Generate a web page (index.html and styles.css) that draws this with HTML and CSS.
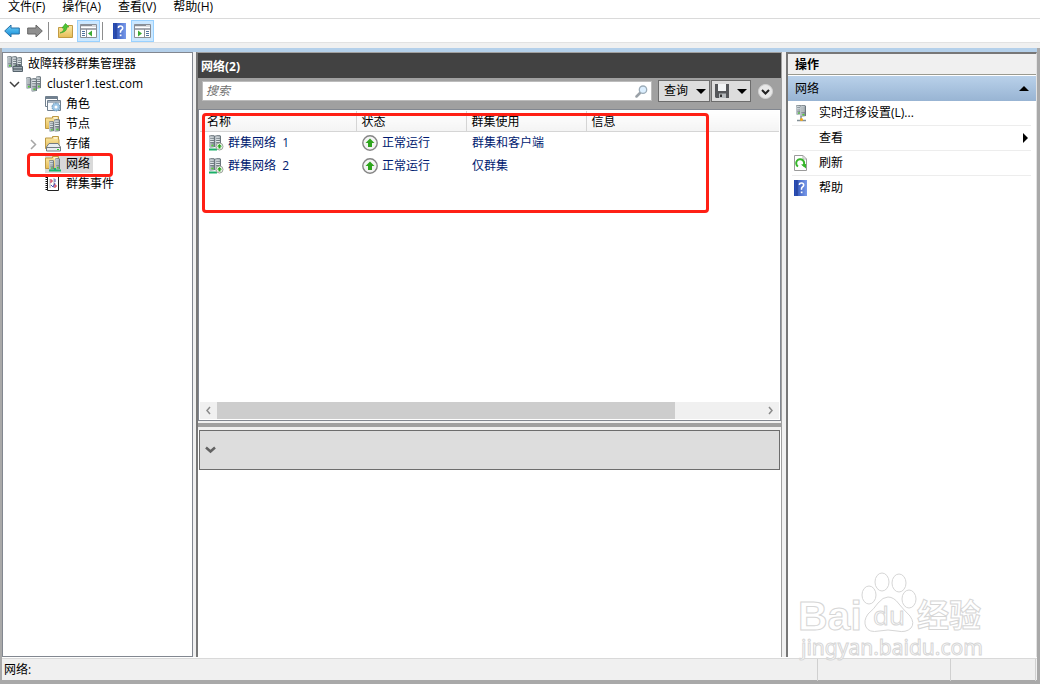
FILE: index.html
```html
<!DOCTYPE html>
<html lang="zh-CN">
<head>
<meta charset="utf-8">
<title>故障转移群集管理器</title>
<link rel="stylesheet" href="styles.css">
</head>
<body>
<svg class="defs" aria-hidden="true">
  <defs>
    <linearGradient id="steel" x1="0" x2="1"><stop offset="0" stop-color="#c3cbd0"/><stop offset="1" stop-color="#77828a"/></linearGradient>
    <linearGradient id="book" x1="0" x2="1"><stop offset="0" stop-color="#2145ae"/><stop offset="1" stop-color="#7a9bea"/></linearGradient>
    <linearGradient id="folder" x1="0" y1="0" x2="0" y2="1"><stop offset="0" stop-color="#fbe9a9"/><stop offset="1" stop-color="#e6bd56"/></linearGradient>
    <linearGradient id="sky" x1="0" y1="0" x2="0" y2="1"><stop offset="0" stop-color="#6fd0fa"/><stop offset="1" stop-color="#128bd6"/></linearGradient>
    <symbol id="rack" viewBox="0 0 5 12" preserveAspectRatio="none">
      <path d="M0 1L4 0L5 1V11L1 12L0 11Z" fill="url(#steel)"/>
      <path d="M0 1L4 0M1 3H4M1 5H4M1 7H4M4.800 1V11" stroke="#5b666d" fill="none" stroke-width=".6"/>
      <path d="M1 2H4M1 4H4M1 6H4" stroke="#edf2f4" stroke-width=".8"/>
      <rect x="2" y="9" width="1.6" height="1.4" fill="#4ed52e"/>
    </symbol>
    <symbol id="servers" viewBox="0 0 16 16">
      <use href="#rack" x="0" y="1" width="5" height="12"/><use href="#rack" x="10" y="0" width="5" height="13"/><use href="#rack" x="5" y="2" width="6" height="14"/>
    </symbol>
    <symbol id="manager" viewBox="0 0 16 16">
      <use href="#rack" x="0" y="0" width="5" height="12"/><use href="#rack" x="5" y="0" width="5" height="13"/><use href="#rack" x="10" y="1" width="5" height="13"/>
      <path d="M6 10.500H15.500V15.500H6Z" fill="#a2adb4" stroke="#56636c"/><path d="M9 10V9H13V10M6 13H15" fill="none" stroke="#414c55"/>
    </symbol>
    <symbol id="roles" viewBox="0 0 16 16">
      <path d="M.5 .5H12.500V10.500H.5Z" fill="#fff" stroke="#71808f"/><path d="M0 2H13" stroke="#71808f" stroke-width="2"/>
      <path d="M2.500 4.500H15.500V14.500H2.500Z" fill="#f9fbfd" stroke="#71808f"/><path d="M3 6H15" stroke="#a7b3bf" stroke-width="2"/>
      <circle cx="11" cy="11" r="4" fill="#9dc6e6" stroke="#608eae" stroke-dasharray="1.500 1"/><circle cx="11" cy="11" r="1.500" fill="#fff"/>
    </symbol>
    <symbol id="dir" viewBox="0 0 16 16"><path d="M.5 2H7.500V.5H13.500V3.500H14V12.500H.5Z" fill="url(#folder)" stroke="#bd9945"/><path d="M9 2H12" stroke="#fff"/></symbol>
    <symbol id="nodes" viewBox="0 0 16 16">
      <use href="#dir" width="16" height="16"/><use href="#rack" x="4" y="5" width="5" height="11"/><use href="#rack" x="9" y="3" width="6" height="13"/>
    </symbol>
    <symbol id="storage" viewBox="0 0 16 16">
      <use href="#dir" width="16" height="16"/><path d="M4 7.500H13L15.500 11V15H1.500V11Z" fill="#e9edef" stroke="#727b82"/><path d="M2 11.500H15" stroke="#727b82"/><path d="M12 13.500H14" stroke="#2ed029"/>
    </symbol>
    <symbol id="networks" viewBox="0 0 16 16">
      <use href="#dir" width="16" height="16"/><use href="#rack" x="4" y="4" width="5" height="10"/><use href="#rack" x="10" y="2" width="5" height="12"/>
      <path d="M4 14.500H16M10 12V15" stroke="#1bb36e" stroke-width="2"/>
    </symbol>
    <symbol id="events" viewBox="0 0 16 16">
      <path d="M2.500 .5H13.500V14.500H2.500Z" fill="#fff" stroke="#222"/><path d="M1.500 1V15" stroke="#111" stroke-width="2" stroke-dasharray="1 1"/>
      <path d="M5 3V12M9 2V12" stroke="#aaa"/><path d="M5 4H7V6H5M9 9H11V11H9" stroke="#d32d47" fill="none"/><path d="M10 3V6M6 9L8 11L10 7" stroke="#4a4cb4" fill="none"/>
    </symbol>
    <symbol id="net-up" viewBox="0 0 16 16">
      <use href="#rack" x="1" y="0" width="6" height="13"/><use href="#rack" x="7" y="0" width="6" height="13"/>
      <path d="M1 14.500H9" stroke="#1bae67" stroke-width="2"/><circle cx="11.500" cy="11.500" r="3.500" fill="#f1f5ef" stroke="#9ca49b"/><path d="M11.500 9L14 11.500H12.500V13.500H10.500V11.500H9Z" fill="#28a51d"/>
    </symbol>
    <symbol id="up" viewBox="0 0 16 16"><circle cx="8" cy="8" r="7.200" fill="#f4f4f4" stroke="#858585" stroke-width="1.400"/><path d="M8 3.500L12.500 8H10V12H6V8H3.500Z" fill="#2fa51d"/></symbol>
    <symbol id="help" viewBox="0 0 13 16"><path d="M0 0H13V16H0Z" fill="url(#book)"/><path d="M3 0V16" stroke="#203b91"/><path d="M5.500 5V4.300Q5.500 3 7.500 3T9.700 5Q9.700 6.200 8.400 7T7.600 9.800" stroke="#fff" stroke-width="1.600" fill="none"/><path d="M6.800 11.500H8.500V13.200H6.800Z" fill="#fff"/></symbol>
    <symbol id="panel" viewBox="0 0 17 14">
      <path d="M.5 .5H16.500V13.500H.5Z" fill="#fff" stroke="#8a8f96"/><path d="M0 1.500H12M0 5H17" stroke="#8a8f96" stroke-width="1.500"/><path d="M12.500 2H13.500M14.500 2H15.500" stroke="#68717b"/>
    </symbol>
    <symbol id="mag" viewBox="0 0 13 13"><path d="M1.500 11.500L5 8" stroke="#9aa1a7" stroke-width="2.500" stroke-linecap="round"/><circle cx="8" cy="4.700" r="3.700" fill="#dcefff" stroke="#9dadb9" stroke-width="1.300"/></symbol>
    <symbol id="disk" viewBox="0 0 14 14"><path d="M0 0H14V14H1L0 13Z" fill="#55575a"/><path d="M3 0H11V7H3Z" fill="#f2f4f5"/><path d="M4 9.500H11V14H4Z" fill="#b6babd"/><path d="M5 10.500H7V13H5Z" fill="#333"/></symbol>
    <symbol id="migrate" viewBox="0 0 12 17"><use href="#rack" x="1" y="0" width="5" height="10"/><use href="#rack" x="5" y="0" width="6" height="12"/><path d="M6 11V15M2 15.500H11" stroke="#849096" stroke-width="1.500"/><circle cx="6.500" cy="14.500" r="1.500" fill="#f3aa1c"/></symbol>
    <symbol id="refresh" viewBox="0 0 13 16"><path d="M.5 .5H9L12.500 4V15.500H.5Z" fill="#fff" stroke="#9a9a9a"/><path d="M9 .5V4H12.500" fill="none" stroke="#b0b0b0"/><path d="M4 11.500A4 4 0 1 1 9 11" fill="none" stroke="#37b62b" stroke-width="2"/><path d="M7 9.500L12 9V13.500Z" fill="#37b62b"/></symbol>
    <symbol id="tri" viewBox="0 0 10 5"><path d="M0 0H10L5 5Z"/></symbol>
  </defs>
</svg>

<nav class="menubar">
  <button>文件(F)</button><button>操作(A)</button><button>查看(V)</button><button>帮助(H)</button>
</nav>
<div class="toolbar">
  <button aria-label="后退"><svg width="16" height="14" viewBox="0 0 16 14"><path d="M.7 7L7 1V4H15.300V10H7V13Z" fill="url(#sky)" stroke="#2870a5"/></svg></button>
  <button aria-label="前进"><svg width="16" height="14" viewBox="0 0 16 14"><path d="M15.300 7L9 1V4H.7V10H9V13Z" fill="#8f8f8f" stroke="#666"/></svg></button>
  <span class="sep"></span>
  <button aria-label="上一级"><svg width="15" height="15" viewBox="0 0 15 15"><path d="M.5 4.500H9L10 2.500H14.500V14.500H.5Z" fill="url(#folder)" stroke="#c19b44"/><path d="M2 10Q6 9 6 5H4L7.500 .5L11 4H9Q9 9 2 10Z" fill="#4fc531" stroke="#2f9a27" stroke-width=".6"/></svg></button>
  <button class="on" aria-label="显示控制台树"><svg width="17" height="14"><use href="#panel"/><path d="M6.500 5V14" stroke="#8a8f96"/><path d="M2 7.500H5M2 9.500H5M2 11.500H5" stroke="#50719d"/><path d="M12 6.500V12.500L8 9.500Z" fill="#3caa35"/></svg></button>
  <span class="sep"></span>
  <button aria-label="帮助"><svg width="13" height="16"><use href="#help"/></svg></button>
  <button class="on" aria-label="显示操作窗格"><svg width="17" height="14"><use href="#panel"/><path d="M10.500 5V14" stroke="#8a8f96"/><path d="M12 7.500H15M12 9.500H15M12 11.500H15" stroke="#50719d"/><path d="M4 6.500V12.500L8 9.500Z" fill="#3caa35"/></svg></button>
</div>

<main class="workspace">
  <nav class="tree">
    <ul>
      <li class="root"><svg class="ico"><use href="#manager"/></svg><a href="#">故障转移群集管理器</a></li>
      <li class="cluster"><svg class="twist" viewBox="0 0 11 11"><path d="M1 3L5.500 7.500L10 3" stroke="#404040"/></svg><svg class="ico"><use href="#servers"/></svg><a href="#">cluster1.test.com</a></li>
      <li class="leaf"><svg class="ico"><use href="#roles"/></svg><a href="#">角色</a></li>
      <li class="leaf"><svg class="ico"><use href="#nodes"/></svg><a href="#">节点</a></li>
      <li class="leaf branch"><svg class="twist" viewBox="0 0 11 11"><path d="M3 1L7.500 5.500L3 10" stroke="#a6a6a6"/></svg><svg class="ico"><use href="#storage"/></svg><a href="#">存储</a></li>
      <li class="leaf"><span class="chosen"><svg class="ico"><use href="#networks"/></svg><a href="#">网络</a></span></li>
      <li class="leaf"><svg class="ico"><use href="#events"/></svg><a href="#">群集事件</a></li>
    </ul>
    <span class="mark mark-tree"></span>
  </nav>

  <section class="center">
    <h1>网络(2)</h1>
    <div class="filter">
      <label class="search"><input type="text" placeholder="搜索" aria-label="搜索"><svg width="13" height="13"><use href="#mag"/></svg></label>
      <button class="tool">查询<svg width="10" height="5"><use href="#tri"/></svg></button>
      <button class="tool save" aria-label="保存查询"><svg width="14" height="14"><use href="#disk"/></svg><svg width="10" height="5"><use href="#tri"/></svg></button>
      <button class="round" aria-label="展开"><svg width="15" height="15" viewBox="0 0 15 15"><circle cx="7.500" cy="7.500" r="7" fill="#e8e8e8" stroke="#d0d0d0"/><path d="M4 6L7.500 9.500L11 6" fill="none" stroke="#222" stroke-width="2"/></svg></button>
    </div>
    <div class="list">
      <table>
        <colgroup><col class="c-name"><col class="c-state"><col class="c-use"><col></colgroup>
        <thead><tr><th>名称</th><th>状态</th><th>群集使用</th><th>信息</th></tr></thead>
        <tbody>
          <tr><td><span class="cell"><svg class="ico"><use href="#net-up"/></svg>群集网络&nbsp; 1</span></td><td><span class="cell"><svg class="ico"><use href="#up"/></svg>正常运行</span></td><td>群集和客户端</td><td></td></tr>
          <tr><td><span class="cell"><svg class="ico"><use href="#net-up"/></svg>群集网络&nbsp; 2</span></td><td><span class="cell"><svg class="ico"><use href="#up"/></svg>正常运行</span></td><td>仅群集</td><td></td></tr>
        </tbody>
      </table>
      <div class="scroll">
        <button aria-label="向左滚动"><svg width="7" height="9" viewBox="0 0 7 9"><path d="M5 1L2 4.500L5 8"/></svg></button>
        <span class="track"><span class="thumb"></span></span>
        <button aria-label="向右滚动"><svg width="7" height="9" viewBox="0 0 7 9"><path d="M2 1L5 4.500L2 8"/></svg></button>
      </div>
      <span class="mark mark-list"></span>
    </div>
    <div class="splitter"></div>
    <div class="details">
      <button aria-label="详细信息"><svg width="11" height="8" viewBox="0 0 11 8"><path d="M1 1.500L5.500 5.500L10 1.500" fill="none" stroke="#626262" stroke-width="2.500"/></svg></button>
    </div>
  </section>

  <aside class="actions">
    <h2>操作</h2>
    <button class="group">网络<svg width="10" height="5" viewBox="0 0 10 5"><path d="M0 5L5 0L10 5Z"/></svg></button>
    <ul>
      <li><button><span class="pic"><svg width="12" height="17"><use href="#migrate"/></svg></span>实时迁移设置(L)...</button></li>
      <li><button><span class="pic"></span>查看<svg class="more" width="5" height="10" viewBox="0 0 5 10"><path d="M0 0L5 5L0 10Z"/></svg></button></li>
      <li><button><span class="pic"><svg width="13" height="16"><use href="#refresh"/></svg></span>刷新</button></li>
      <li><button><span class="pic"><svg width="13" height="16"><use href="#help"/></svg></span>帮助</button></li>
    </ul>
  </aside>
</main>
<footer class="status"><span>网络:</span><span></span><span></span></footer>

<svg class="watermark" width="194" height="92" viewBox="0 0 194 92" aria-label="Baidu 经验">
  <ellipse cx="73" cy="25" rx="7" ry="9"/><ellipse cx="86" cy="12" rx="7" ry="9"/><ellipse cx="103" cy="13" rx="7" ry="9"/><ellipse cx="113" cy="29" rx="7" ry="9"/>
  <path d="M92 27Q98 27 103 34Q108 40 114 46Q119 53 115 58Q110 63 101 61Q92 59 83 61Q73 63 70 57Q67 51 72 44Q78 39 82 33Q87 27 92 27Z"/>
  <text x="2" y="60" class="wm-bai">Bai</text><text x="77" y="55" class="wm-du">du</text><text x="121" y="57" class="wm-cn">经验</text>
  <text x="5" y="85" class="wm-url">jingyan.baidu.com</text>
</svg>
</body>
</html>
```

FILE: styles.css
```css
* { box-sizing: border-box; }
body {
  margin: 0;
  min-height: 100vh;
  display: flex;
  flex-direction: column;
  position: relative;
  background: #f0f0f0;
  color: #000;
  font: 12px/14px "Open Sans", "Noto Sans CJK SC", sans-serif;
}
button, input { font: inherit; color: inherit; }
button { border: 0; padding: 0; background: none; display: flex; align-items: center; }
a { color: inherit; text-decoration: none; }
ul { list-style: none; margin: 0; padding: 0; }
svg { flex: none; display: block; }
.defs { position: absolute; width: 0; height: 0; }
.ico { width: 16px; height: 16px; }

.menubar { display: flex; gap: 17px; height: 19px; padding: 0 8px 4px; background: #fff; border-bottom: 1px solid #dadada; }
.toolbar { display: flex; align-items: center; height: 24px; background: #fff; border-bottom: 1px solid #e2e2e2; }
.toolbar button { width: 23px; height: 22px; justify-content: center; }
.toolbar .on { background: #cce8ff; border: 1px solid #99d1ff; }
.toolbar .sep { width: 1px; height: 18px; background: #8d8d8d; margin: 0 5px 0 2px; }

.workspace {
  flex: 1;
  display: grid;
  grid-template-columns: 191px minmax(0, 1fr) 251px;
  margin-top: 5px;
  padding-top: 4px;
  border: solid #a9a9a9;
  border-width: 0 3px 0 2px;
  background: linear-gradient(#b4d0ea 4px, #f0f0f0 4px);
}
.tree { position: relative; background: #fff; border: 1px solid #828790; padding-top: 1px; }
.tree li { display: flex; align-items: center; height: 20px; }
.tree .ico { margin-right: 5px; }
.root { padding-left: 4px; }
.cluster { padding-left: 6px; }
.cluster .twist { margin-right: 6px; }
.leaf { padding-left: 42px; }
.branch { padding-left: 25px; }
.branch .twist { margin-right: 6px; }
.twist { width: 11px; height: 11px; fill: none; stroke-width: 1.5; }
.chosen { display: flex; align-items: center; height: 18px; background: #d9d9d9; padding-right: 3px; }
.mark { position: absolute; border: 3px solid #ff2015; border-radius: 4px; pointer-events: none; }
.mark-tree { left: 24px; top: 100px; width: 86px; height: 24px; }

.center { display: flex; flex-direction: column; margin: 0 4px 0 3px; border: solid #a0a0a0; border-width: 1px 1px 0 2px; border-left-color: #777; background: #fff; }
h1 { margin: 0; height: 25px; padding-left: 3px; background: #424242; color: #fff; font: bold 12px/28px "Open Sans", "Noto Sans CJK SC", sans-serif; }
.filter { display: flex; align-items: center; height: 31px; padding: 0 8px 5px 4px; background: #a0a0a0; }
.search { flex: 1; display: flex; align-items: center; height: 20px; margin-right: 6px; padding: 0 3px; background: #fff; border: 1px solid #bcbcbc; }
.search input { flex: 1; min-width: 0; border: 0; padding: 0; outline: 0; background: none; font-style: italic; }
.search input::placeholder { color: #707070; opacity: 1; }
.tool { height: 22px; padding: 0 3px 0 5px; margin-right: 1px; background: #ddd; border: 1px solid #6d6d6d; gap: 8px; }
.save { padding-left: 3px; }
.round { margin-left: 6px; }

.list { position: relative; height: 312px; display: flex; flex-direction: column; justify-content: space-between; border: 1px solid #828790; padding: 1px; }
table { width: 100%; table-layout: fixed; border-collapse: collapse; }
.c-name { width: 156px; }
.c-state { width: 110px; }
.c-use { width: 120px; }
th { height: 20px; padding: 2px 5px 0; text-align: left; font-weight: normal; background: linear-gradient(#fff, #f4f4f4); border: solid #d5d5d5; border-width: 0 1px 1px 0; }
th:first-child { padding-left: 7px; }
th:last-child { border-right: 0; }
td { height: 23px; padding: 0 6px; color: #001a70; white-space: nowrap; }
.cell { display: flex; align-items: center; gap: 4px; }
td:first-child { padding-left: 8px; }
.scroll { display: flex; height: 17px; background: #f0f0f0; }
.scroll button { width: 17px; justify-content: center; }
.scroll path { fill: none; stroke: #8a8a8a; stroke-width: 1.5; }
.track { flex: 1; }
.thumb { display: block; width: 84%; height: 100%; background: #cdcdcd; }
.mark-list { left: 3px; top: 3px; width: 507px; height: 100px; }
.splitter { height: 9px; background: #a0a0a0; border: solid #f0f0f0; border-width: 2px 0 3px; }
.details { margin: 0 1px; height: 40px; display: flex; align-items: center; padding-left: 5px; background: #ddd; border: 1px solid #6d6d6d; }

.actions { border: 1px solid #777; border-width: 2px 1px 0 2px; border-right-color: #e3e3e3; background: #fff; }
h2 { margin: 0 0 1px; height: 21px; padding-left: 7px; background: #f0f0f0; border-bottom: 1px solid #9a9a90; font: bold 12px/21px "Open Sans", "Noto Sans CJK SC", sans-serif; }
.group { width: 100%; height: 25px; padding: 0 7px; justify-content: space-between; background: linear-gradient(#b9d1ea, #98b4d3); }
.actions ul { padding: 0 5px 0 4px; }
.actions li + li { border-top: 1px solid #ededed; }
.actions li button { width: 100%; height: 24px; }
.pic { width: 17px; margin-right: 10px; display: flex; justify-content: center; }
.more { margin-left: auto; margin-right: 3px; }

.status { display: grid; grid-template-columns: minmax(0, 1fr) 133px 85px; height: 27px; padding: 2px 1px 2px 0; background: #f0f0f0; border: solid #a9a9a9; border-width: 0 3px 4px 2px; box-shadow: inset 0 1px #fff, inset 0 2px #d9d9d9; }
.status span { padding: 4px 2px; border-right: 1px solid #d0d0d0; }

.watermark { position: absolute; right: 50px; bottom: 22px; overflow: visible; fill: #fff; fill-opacity: .9; stroke: #d6d6d6; stroke-width: 1; }
.wm-bai { font: bold 41px "Liberation Sans", sans-serif; }
.wm-du { font: 26px "Open Sans", sans-serif; }
.wm-cn { font: bold 32px "Noto Sans CJK SC", sans-serif; }
.wm-url { font: 21px "Noto Sans", sans-serif; }
```
